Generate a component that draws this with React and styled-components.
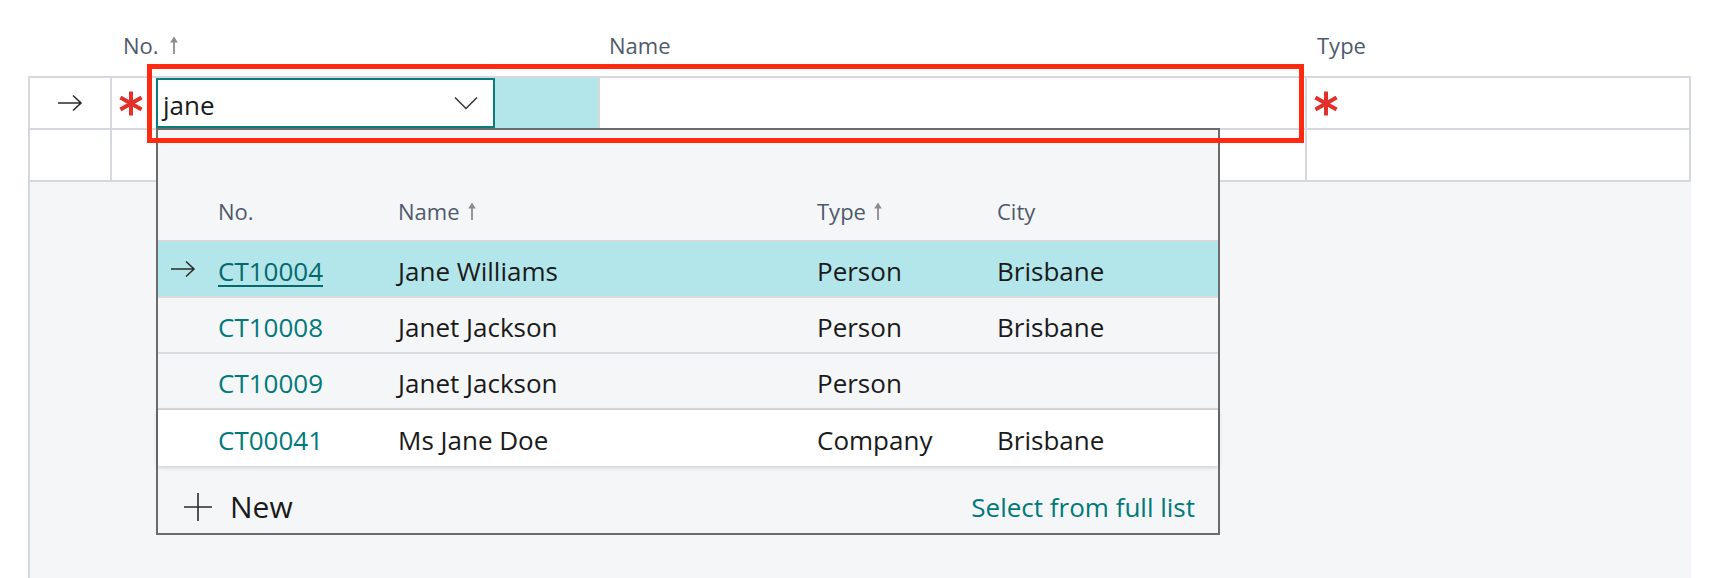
import React from 'react';
import styled, { createGlobalStyle, css } from 'styled-components';

const line = '#d5d8dc';
const teal = '#00797a';
const cyan = '#b3e6eb';

const GlobalStyle = createGlobalStyle`
  html, body, #root {
    height: 100%;
  }
  body {
    margin: 0;
    background: #fff;
    font-family: "Open Sans", "Noto Sans", sans-serif;
    color: #1a1a1a;
  }
`;

const cols = '82px 488px 707px 384px';
const listCols = '60px 180px 419px 180px 1fr';

const rows = [
  { no: 'CT10004', name: 'Jane Williams', type: 'Person', city: 'Brisbane', selected: true },
  { no: 'CT10008', name: 'Janet Jackson', type: 'Person', city: 'Brisbane' },
  { no: 'CT10009', name: 'Janet Jackson', type: 'Person', city: '' },
  { no: 'CT00041', name: 'Ms Jane Doe', type: 'Company', city: 'Brisbane', raised: true },
];

const RowArrow = () => (
  <svg width="26" height="18" viewBox="0 0 26 18">
    <path d="M1 9h23M16 1.5l8 7.5-8 7.5" fill="none" stroke="#2b2b2b" strokeWidth="1.6" />
  </svg>
);

const Asterisk = () => (
  <svg width="26" height="25" viewBox="0 0 26 25">
    <path
      d="M13 0.5v24M2.4 6.4l21.2 12.2M2.4 18.6l21.2-12.2"
      fill="none"
      stroke="#e3302b"
      strokeWidth="4"
    />
  </svg>
);

const Chevron = () => (
  <svg width="24" height="14" viewBox="0 0 24 14">
    <path d="M1 1.5l11 11 11-11" fill="none" stroke="#333" strokeWidth="1.5" />
  </svg>
);

const SortArrow = () => (
  <svg width="10" height="18" viewBox="0 0 10 18">
    <path d="M5 0.5L1.2 6.5h7.6z" fill="#8c8c8c" />
    <path d="M5 5v13" stroke="#8c8c8c" strokeWidth="1.8" />
  </svg>
);

const Plus = () => (
  <svg width="28" height="28" viewBox="0 0 28 28">
    <path d="M14 0v28M0 14h28" stroke="#2b2b2b" strokeWidth="1.6" />
  </svg>
);

const App = () => (
  <Page>
    <GlobalStyle />
    <HeaderRow>
      <HeadCell />
      <HeadCell $pad={11}>
        No. <SortArrow />
      </HeadCell>
      <HeadCell $pad={9}>Name</HeadCell>
      <HeadCell $pad={10}>Type</HeadCell>
    </HeaderRow>
    <Sheet>
      <GridRow $active>
        <Cell $center>
          <RowArrow />
        </Cell>
        <Cell $pad={6}>
          <Asterisk />
          <Field>
            <Input>
              <span>jane</span>
              <Chevron />
            </Input>
            <Dropdown>
              <ListHead>
                <span />
                <ListHeadCell>No.</ListHeadCell>
                <ListHeadCell>
                  Name <SortArrow />
                </ListHeadCell>
                <ListHeadCell>
                  Type <SortArrow />
                </ListHeadCell>
                <ListHeadCell>City</ListHeadCell>
              </ListHead>
              {rows.map((r) => (
                <ListRow key={r.no} $selected={r.selected} $raised={r.raised}>
                  <ArrowSlot>{r.selected && <RowArrow />}</ArrowSlot>
                  <Link $underline={r.selected}>{r.no}</Link>
                  <span>{r.name}</span>
                  <span>{r.type}</span>
                  <span>{r.city}</span>
                </ListRow>
              ))}
              <Footer>
                <NewButton>
                  <Plus />
                  New
                </NewButton>
                <Link>Select from full list</Link>
              </Footer>
            </Dropdown>
          </Field>
        </Cell>
        <Cell />
        <Cell $pad={6}>
          <Asterisk />
        </Cell>
        <Highlight />
      </GridRow>
      <GridRow>
        <Cell />
        <Cell />
        <Cell />
        <Cell />
      </GridRow>
    </Sheet>
  </Page>
);

const Page = styled.div`
  height: 100%;
  box-sizing: border-box;
  padding-left: 28px;
  display: flex;
  flex-direction: column;
`;

const HeaderRow = styled.div`
  display: grid;
  grid-template-columns: ${cols};
  width: 1663px;
  box-sizing: border-box;
  padding-left: 2px;
  height: 76px;
  padding-bottom: 16px;
  align-items: end;
`;

const HeadCell = styled.div`
  display: flex;
  align-items: center;
  gap: 10px;
  padding-left: ${(p) => p.$pad || 0}px;
  font-size: 22px;
  line-height: 30px;
  color: #4e5a6b;
`;

const Sheet = styled.div`
  flex: 1;
  width: 1663px;
  box-sizing: border-box;
  background: #f5f6f8;
  border-left: 2px solid ${line};
  border-top: 2px solid ${line};
`;

const GridRow = styled.div`
  display: grid;
  grid-template-columns: ${cols};
  height: 52px;
  background: #fff;
  position: relative;
  ${(p) =>
    p.$active &&
    css`
      z-index: 2;
    `}
`;

const Cell = styled.div`
  display: flex;
  align-items: center;
  box-sizing: border-box;
  border-right: 2px solid ${line};
  border-bottom: 2px solid ${line};
  padding-left: ${(p) => p.$pad || 0}px;
  justify-content: ${(p) => (p.$center ? 'center' : 'flex-start')};
`;

const Field = styled.div`
  position: relative;
  align-self: stretch;
  width: 442px;
  margin-left: auto;
  background: ${cyan};
`;

const Input = styled.div`
  width: 339px;
  height: 100%;
  box-sizing: border-box;
  border: 2px solid #0b7b7c;
  background: #fff;
  display: flex;
  align-items: center;
  justify-content: space-between;
  padding: 4px 15px 0 5px;
  font-size: 26px;
  color: #1a1a1a;
  svg {
    margin-top: -4px;
  }
`;

const Highlight = styled.div`
  position: absolute;
  left: 117px;
  top: -14px;
  width: 1157px;
  height: 79px;
  box-sizing: border-box;
  border: 5px solid #ff2a10;
  z-index: 10;
  pointer-events: none;
`;

const Dropdown = styled.div`
  position: absolute;
  left: 0;
  top: 100%;
  width: 1064px;
  height: 407px;
  box-sizing: border-box;
  border: 2px solid #6b6b6b;
  background: #f5f6f8;
  z-index: 5;
  display: flex;
  flex-direction: column;
`;

const ListHead = styled.div`
  display: grid;
  grid-template-columns: ${listCols};
  height: 112px;
  flex: none;
  box-sizing: border-box;
  border-bottom: 2px solid ${line};
  align-items: end;
  padding-bottom: 14px;
`;

const ListHeadCell = styled.div`
  display: flex;
  align-items: center;
  gap: 7px;
  font-size: 22px;
  line-height: 30px;
  color: #4e5a6b;
`;

const ListRow = styled.div`
  display: grid;
  grid-template-columns: ${listCols};
  height: 56px;
  flex: none;
  box-sizing: border-box;
  align-items: center;
  padding-top: 4px;
  font-size: 26px;
  border-bottom: 2px solid #d9dbde;
  background: ${(p) => (p.$selected ? cyan : p.$raised ? '#fff' : 'transparent')};
  ${(p) =>
    p.$raised &&
    css`
      position: relative;
      border-bottom: none;
      box-shadow: 0 1px 5px rgba(0, 0, 0, 0.2);
    `}
`;

const ArrowSlot = styled.span`
  display: flex;
  padding-left: 12px;
  margin-top: -4px;
`;

const Link = styled.span`
  color: ${(p) => (p.$underline ? '#05696b' : teal)};
  text-decoration: ${(p) => (p.$underline ? 'underline' : 'none')};
  text-decoration-thickness: 2px;
  text-underline-offset: 4px;
  font-size: 26px;
`;

const Footer = styled.div`
  flex: 1;
  display: flex;
  align-items: center;
  justify-content: space-between;
  padding: 14px 23px 0 26px;
`;

const NewButton = styled.div`
  display: flex;
  align-items: center;
  gap: 18px;
  font-size: 30px;
  color: #1a1a1a;
`;

export default App;
